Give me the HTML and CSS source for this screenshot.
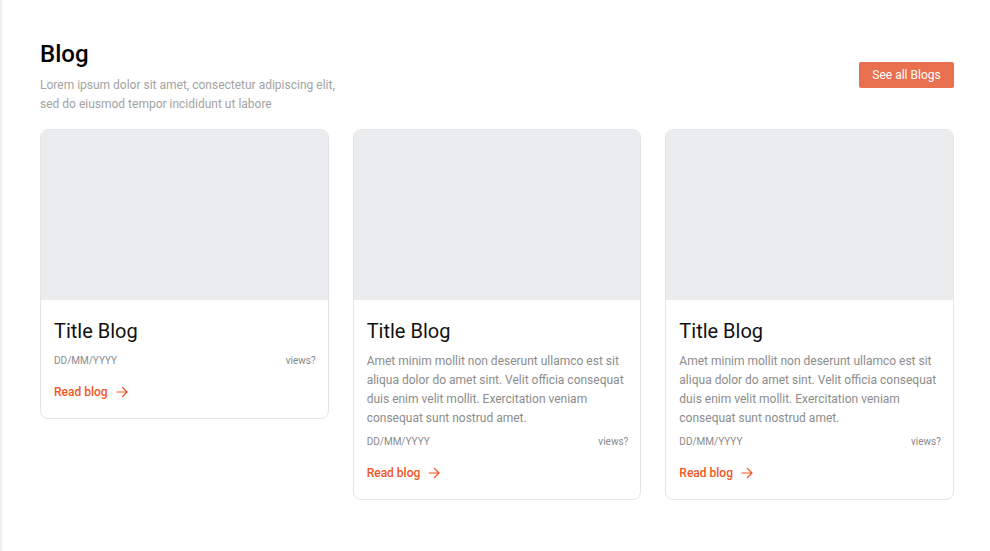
FILE: index.html
```html
<!DOCTYPE html>
<html lang="en">
<head>
<meta charset="utf-8">
<title>Blog</title>
<link rel="stylesheet" href="styles.css">
</head>
<body>
<main class="page">
  <header class="head">
    <div class="head-text">
      <h1 class="title">Blog</h1>
      <p class="subtitle">Lorem ipsum dolor sit amet, consectetur adipiscing elit, sed do eiusmod tempor incididunt ut labore</p>
    </div>
    <a class="btn" href="#">See all Blogs</a>
  </header>
  <section class="cards">
    <article class="card">
      <div class="thumb"></div>
      <div class="card-body">
        <h2 class="card-title">Title Blog</h2>
        <div class="meta"><span>DD/MM/YYYY</span><span>views?</span></div>
        <a class="read" href="#">Read blog
          <svg class="arrow" width="12" height="12" viewBox="0 0 12 12" fill="none" stroke="currentColor" stroke-width="1.2" stroke-linecap="round" stroke-linejoin="round"><path d="M1 6h10M6.5 1.5L11 6l-4.5 4.5"/></svg>
        </a>
      </div>
    </article>
    <article class="card">
      <div class="thumb"></div>
      <div class="card-body">
        <h2 class="card-title">Title Blog</h2>
        <p class="desc">Amet minim mollit non deserunt ullamco est sit aliqua dolor do amet sint. Velit officia consequat duis enim velit mollit. Exercitation veniam consequat sunt nostrud amet.</p>
        <div class="meta"><span>DD/MM/YYYY</span><span>views?</span></div>
        <a class="read" href="#">Read blog
          <svg class="arrow" width="12" height="12" viewBox="0 0 12 12" fill="none" stroke="currentColor" stroke-width="1.2" stroke-linecap="round" stroke-linejoin="round"><path d="M1 6h10M6.5 1.5L11 6l-4.5 4.5"/></svg>
        </a>
      </div>
    </article>
    <article class="card">
      <div class="thumb"></div>
      <div class="card-body">
        <h2 class="card-title">Title Blog</h2>
        <p class="desc">Amet minim mollit non deserunt ullamco est sit aliqua dolor do amet sint. Velit officia consequat duis enim velit mollit. Exercitation veniam consequat sunt nostrud amet.</p>
        <div class="meta"><span>DD/MM/YYYY</span><span>views?</span></div>
        <a class="read" href="#">Read blog
          <svg class="arrow" width="12" height="12" viewBox="0 0 12 12" fill="none" stroke="currentColor" stroke-width="1.2" stroke-linecap="round" stroke-linejoin="round"><path d="M1 6h10M6.5 1.5L11 6l-4.5 4.5"/></svg>
        </a>
      </div>
    </article>
  </section>
</main>
</body>
</html>
```

FILE: styles.css
```css
* { box-sizing: border-box; }
html, body { margin: 0; padding: 0; }
body {
  font-family: Roboto, "Liberation Sans", sans-serif;
  background: #ffffff;
  color: #111;
}
.page {
  min-height: 551px;
  border-left: 2px solid #efefef;
  padding: 39px 36px 0 38px;
}
.head {
  display: flex;
  justify-content: space-between;
  align-items: flex-start;
}
.title {
  margin: 0;
  font-size: 24px;
  line-height: 30px;
  font-weight: 500;
  color: #000;
}
.subtitle {
  margin: 7px 0 0;
  max-width: 300px;
  font-size: 12px;
  line-height: 19px;
  color: #a3a3a3;
}
.btn {
  display: inline-flex;
  align-items: center;
  justify-content: center;
  width: 95px;
  height: 26px;
  margin-top: 23px;
  background: #e8704f;
  color: #fff;
  font-size: 12px;
  text-decoration: none;
  border-radius: 2px;
}
.cards {
  margin-top: 15px;
  display: grid;
  grid-template-columns: repeat(3, 1fr);
  gap: 24px;
  align-items: start;
}
.card {
  border: 1px solid #e4e5e8;
  border-radius: 8px;
  overflow: hidden;
  background: #fff;
}
.thumb {
  height: 170px;
  background: #ebecee;
}
.card-body {
  padding: 19px 12px 18px 13px;
}
.card-title {
  margin: 0;
  font-size: 20px;
  line-height: 24px;
  font-weight: 400;
  color: #111;
}
.desc {
  margin: 9px 0 7px;
  font-size: 12px;
  line-height: 19px;
  color: #8c8c8c;
}
.card-title + .meta { margin-top: 11px; }
.meta {
  display: flex;
  justify-content: space-between;
  font-size: 10px;
  line-height: 14px;
  color: #8a8a8a;
}
.read {
  margin-top: 16px;
  display: inline-flex;
  align-items: center;
  gap: 8px;
  font-size: 12px;
  line-height: 16px;
  font-weight: 500;
  color: #f4561f;
  text-decoration: none;
}
.arrow { display: block; }
```
